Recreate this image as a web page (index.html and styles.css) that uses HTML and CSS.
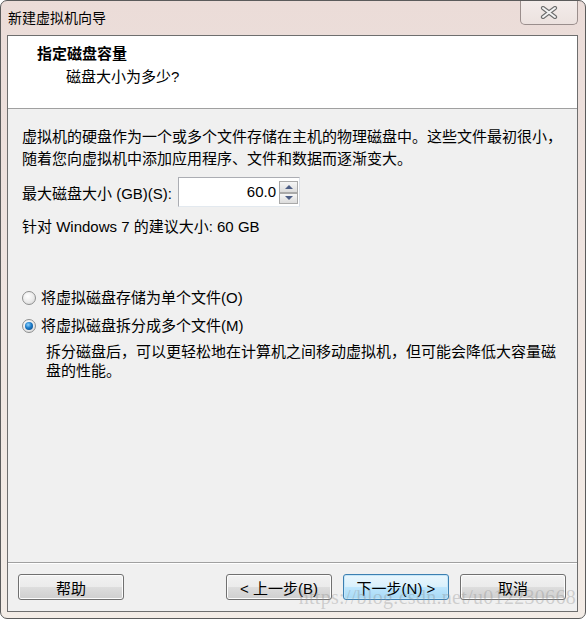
FILE: index.html
```html
<!DOCTYPE html>
<html lang="zh-CN">
<head>
    <meta charset="UTF-8">
    <meta name="viewport" content="width=device-width, initial-scale=1.0">
    <title>新建虚拟机向导</title>
    <link rel="stylesheet" href="styles.css">
</head>
<body>
    <div class="window">
        <div class="titlebar">
            <span class="title">新建虚拟机向导</span>
            <button class="close">
                <svg width="18" height="13" viewBox="0 0 18 13">
                    <path d="M3 2 L15 11 M15 2 L3 11" stroke="#6f6f6f" stroke-width="4.2" stroke-linecap="round"/>
                    <path d="M3 2 L15 11 M15 2 L3 11" stroke="#f4f4f4" stroke-width="2" stroke-linecap="round"/>
                </svg>
            </button>
        </div>
        <div class="client">
            <div class="header">
                <h1>指定磁盘容量</h1>
                <p class="subtitle">磁盘大小为多少?</p>
            </div>
            <div class="body">
                <p class="intro">虚拟机的硬盘作为一个或多个文件存储在主机的物理磁盘中。这些文件最初很小，<br>随着您向虚拟机中添加应用程序、文件和数据而逐渐变大。</p>
                <div class="size-row">
                    <label>最大磁盘大小 (GB)(S):</label>
                    <div class="spin">
                        <div class="spin-input">60.0</div>
                        <div class="spin-btns">
                            <span class="spin-btn up"></span>
                            <span class="spin-btn down"></span>
                        </div>
                    </div>
                </div>
                <p class="hint">针对 Windows 7 的建议大小: 60 GB</p>
                <div class="options">
                    <div class="radio"><span class="dot"></span>将虚拟磁盘存储为单个文件(O)</div>
                    <div class="radio checked"><span class="dot"></span>将虚拟磁盘拆分成多个文件(M)</div>
                    <p class="desc">拆分磁盘后，可以更轻松地在计算机之间移动虚拟机，但可能会降低大容量磁<br>盘的性能。</p>
                </div>
            </div>
            <div class="footer">
                <button class="btn">帮助</button>
                <div class="nav">
                    <button class="btn">&lt; 上一步(B)</button>
                    <button class="btn default">下一步(N) &gt;</button>
                    <button class="btn">取消</button>
                </div>
            </div>
        </div>
        <div class="watermark">https://blog.csdn.net/u012230668</div>
    </div>
</body>
</html>
```

FILE: styles.css
```css
*{
    margin: 0;
    padding: 0;
    box-sizing: border-box;
}
body{
    background-color: #fff;
    font-family: "Liberation Sans", "Noto Sans CJK SC", sans-serif;
    font-size: 15px;
    color: #000;
}
.window{
    position: relative;
    width: 586px;
    height: 619px;
    display: flex;
    flex-direction: column;
    border: 1px solid #5b5b5b;
    border-radius: 7px 7px 7px 7px;
    background: linear-gradient(to bottom, #ebdcd8 0%, #eee3df 40%, #f3ece6 100%);
    overflow: hidden;
}
.titlebar{
    height: 34px;
    display: flex;
    align-items: flex-start;
    justify-content: space-between;
    padding: 0 7px;
}
.title{
    line-height: 34px;
    font-size: 14px;
}
.close{
    width: 58px;
    height: 24px;
    border: 1px solid #9a8e8c;
    border-top: none;
    border-radius: 0 0 5px 5px;
    background: linear-gradient(to bottom, #f3ecea, #ece2df);
    display: flex;
    align-items: center;
    justify-content: center;
}
.client{
    flex: 1;
    margin: 0 7px 6px 6px;
    border: 1px solid #6e6e6e;
    background-color: #f0f0f0;
    display: flex;
    flex-direction: column;
}
.header{
    height: 73px;
    background-color: #fff;
    border-bottom: 1px solid #a0a0a0;
    padding-top: 7px;
}
.header h1{
    font-size: 15px;
    font-weight: bold;
    line-height: 22px;
    padding-left: 29px;
}
.subtitle{
    line-height: 22px;
    margin-top: 1px;
    padding-left: 58px;
}
.body{
    flex: 1;
    padding: 17px 14px 0 14px;
}
.intro{
    line-height: 22px;
}
.size-row{
    display: flex;
    align-items: center;
    margin-top: 7px;
}
.size-row label{
    width: 156px;
}
.spin{
    display: flex;
    width: 122px;
    height: 30px;
    border: 1px solid #abadb3;
    border-right-color: #dbdfe6;
    border-bottom-color: #e3e9ef;
    background-color: #fff;
}
.spin-input{
    width: 100px;
    text-align: right;
    padding-right: 3px;
    line-height: 28px;
}
.spin-btns{
    flex: 1;
    display: flex;
    flex-direction: column;
    padding: 3px 1px 2px 0;
}
.spin-btn{
    flex: 1;
    position: relative;
    border: 1px solid #a9a9a9;
    background: linear-gradient(to bottom, #f6f6f6, #dcdcdc);
}
.spin-btn::after{
    content: "";
    position: absolute;
    left: 50%;
    top: 50%;
    margin-left: -4px;
    border-left: 4px solid transparent;
    border-right: 4px solid transparent;
}
.up::after{
    margin-top: -2px;
    border-bottom: 4px solid #4e5f86;
}
.down::after{
    margin-top: -2px;
    border-top: 4px solid #4e5f86;
}
.hint{
    line-height: 22px;
    margin-top: 9px;
}
.options{
    margin-top: 49px;
}
.radio{
    display: flex;
    align-items: center;
    line-height: 22px;
    margin-bottom: 6px;
}
.dot{
    width: 14px;
    height: 14px;
    border-radius: 50%;
    border: 1px solid #8e8f8f;
    background: radial-gradient(circle at 40% 35%, #ffffff 0%, #eaeaea 55%, #cfcfcf 100%);
    margin-right: 5px;
    position: relative;
}
.checked .dot::after{
    content: "";
    position: absolute;
    left: 2px;
    top: 2px;
    width: 8px;
    height: 8px;
    border-radius: 50%;
    background: radial-gradient(circle at 40% 35%, #8fd3ff 0%, #1b7bc8 45%, #0c3f78 100%);
}
.desc{
    line-height: 19px;
    padding-left: 24px;
    margin-top: -1px;
}
.footer{
    height: 49px;
    border-top: 1px solid #a0a0a0;
    box-shadow: inset 0 1px 0 #fff;
    display: flex;
    justify-content: space-between;
    padding: 11px 11px 0 10px;
}
.nav{
    display: flex;
    gap: 11px;
}
.btn{
    width: 106px;
    height: 26px;
    font-family: "Liberation Sans", "Noto Sans CJK SC", sans-serif;
    font-size: 15px;
    color: #000;
    border: 1px solid #707070;
    border-radius: 3px;
    background: linear-gradient(to bottom, #f2f2f2 0%, #ebebeb 50%, #dddddd 51%, #cfcfcf 100%);
    box-shadow: inset 0 0 0 1px #fcfcfc;
}
.default{
    border-color: #3c7fb1;
    background: linear-gradient(to bottom, #eaf6fd 0%, #d9f0fc 50%, #bee6fd 51%, #a7d9f5 100%);
    box-shadow: inset 0 0 0 1px #c5e6f8;
}
.watermark{
    position: absolute;
    right: 9px;
    bottom: 9px;
    font-family: "Liberation Serif", serif;
    font-size: 20px;
    letter-spacing: 0.3px;
    color: rgba(140, 140, 140, 0.35);
    pointer-events: none;
}
```
